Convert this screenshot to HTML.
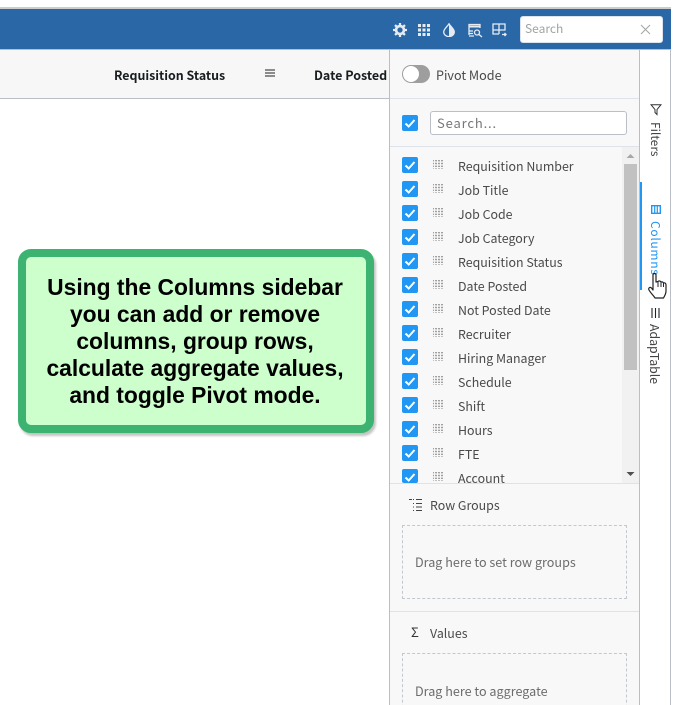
<!DOCTYPE html>
<html><head><meta charset="utf-8">
<style>
html,body{margin:0;padding:0;background:#fff;width:680px;height:705px;overflow:hidden}
body{position:relative;font-family:"Noto Sans CJK JP","Liberation Sans",sans-serif;color:#444}
.a{position:absolute;box-sizing:border-box}
.t{position:absolute;white-space:nowrap;font-size:12.4px;line-height:18px;color:#4a4a4a}
.cb{position:absolute;left:402px;width:16px;height:16px;background:#2196f3;border-radius:2px}
.cb svg{display:block}
.gr{position:absolute;left:433px;width:11px;height:10px}
.v{position:absolute;writing-mode:vertical-rl;white-space:nowrap;font-size:12px;line-height:16px}
</style></head><body>
<div class="a" style="left:0;top:7px;width:671px;height:2px;background:#ccc"></div>
<div class="a" style="left:0;top:9px;width:671px;height:40px;background:#2a67a7"></div>
<div class="a" style="left:0;top:49px;width:671px;height:1px;background:#babfc7"></div>

<div class="a" style="left:0;top:50px;width:389px;height:48px;background:#f7f7f7"></div>
<div class="a" style="left:0;top:98px;width:389px;height:1px;background:#babfc7"></div>
<div class="t" style="left:114px;top:66px;font-weight:700;font-size:12.4px;color:#181d1f">Requisition Status</div>
<svg class="a" style="left:265px;top:69px" width="10" height="9"><path d="M0 1H10M0 4H10M0 7H10" stroke="#222" stroke-width="1"/></svg>
<div class="t" style="left:314px;top:66px;font-weight:700;font-size:12.5px;color:#181d1f">Date Posted</div>

<!-- toolbar icons -->
<svg class="a" style="left:393px;top:23px" width="14" height="14" viewBox="0 0 16 16"><circle cx="8" cy="8" r="4.5" fill="none" stroke="#e6ebf2" stroke-width="3"/><path d="M8 0V16M0 8H16M2.300 2.300L13.700 13.700M13.700 2.300L2.300 13.700" stroke="#e6ebf2" stroke-width="2.600" stroke-dasharray="2.600 10.800 2.600 0"/></svg>
<svg class="a" style="left:418px;top:24px" width="12" height="12" fill="#e6ebf2"><rect x="0" y="0" width="3" height="3"/><rect x="4.500" y="0" width="3" height="3"/><rect x="9" y="0" width="3" height="3"/><rect x="0" y="4.500" width="3" height="3"/><rect x="4.500" y="4.500" width="3" height="3"/><rect x="9" y="4.500" width="3" height="3"/><rect x="0" y="9" width="3" height="3"/><rect x="4.500" y="9" width="3" height="3"/><rect x="9" y="9" width="3" height="3"/></svg>
<svg class="a" style="left:443px;top:23px" width="12" height="14" viewBox="0 0 12 14"><path d="M6 .8C4.500 3.500.7 6 .7 9a5.300 4.600 0 0 0 10.600 0C11.300 6 7.500 3.500 6 .8Z" fill="none" stroke="#e6ebf2" stroke-width="1.300"/><path d="M6 .8C7.500 3.500 11.300 6 11.300 9a5.300 4.600 0 0 1-5.300 4.600Z" fill="#e6ebf2"/></svg>
<svg class="a" style="left:468px;top:23px" width="15" height="15" viewBox="0 0 15 15" fill="none" stroke="#e6ebf2" stroke-width="1.300"><path d="M1 12V1.500H12V5"/><path d="M1 3.500H12" stroke-width="2"/><path d="M6 13H1M1 8H5M1 10.500H5"/><circle cx="9" cy="9.500" r="2.500"/><path d="M11 11.500L14 14"/></svg>
<svg class="a" style="left:492px;top:23px" width="15" height="14" viewBox="0 0 15 14" fill="none" stroke="#e6ebf2" stroke-width="1.300"><path d="M7 11H1V1H13V7H1M7 1V11"/><path d="M10 11.500H14M12.500 10L14 11.500L12.500 13"/></svg>

<div class="a" style="left:520px;top:16px;width:143px;height:27px;background:#fff;border-radius:3px;border:1px solid #dbe3ee"></div>
<div class="t" style="left:525px;top:20px;font-size:12px;color:#a3a3a3">Search</div>
<svg class="a" style="left:640px;top:24px" width="11" height="11"><path d="M1 1L10 10M10 1L1 10" stroke="#a8a8a8" stroke-width="1.100"/></svg>

<!-- panel -->
<div class="a" style="left:389px;top:50px;width:251px;height:655px;background:#f8f8f8;border-left:1px solid #babfc7;border-right:1px solid #babfc7"></div>
<div class="a" style="left:670px;top:50px;width:1px;height:655px;background:#babfc7"></div>
<div class="a" style="left:390px;top:98px;width:249px;height:1px;background:#dde2eb"></div>

<div class="a" style="left:402px;top:65px;width:28px;height:18px;background:#9e9e9e;border-radius:9px"></div>
<div class="a" style="left:403px;top:66px;width:16px;height:16px;background:#fff;border-radius:8px"></div>
<div class="t" style="left:436px;top:66px;font-size:12.600px">Pivot Mode</div>

<div class="cb" style="top:115px"><svg width="16" height="16"><path d="M3.500 8.500L6.700 11.500L12.500 5" fill="none" stroke="#fff" stroke-width="2"/></svg></div>
<div class="a" style="left:430px;top:111px;width:197px;height:24px;background:#fff;border:1px solid #babfc7;border-radius:3px"></div>
<div class="t" style="left:437px;top:114px;font-size:13px;letter-spacing:.85px;color:#777">Search...</div>
<div class="a" style="left:390px;top:146px;width:249px;height:1px;background:#dde2eb"></div>

<!-- list -->
<div class="a" style="left:622px;top:147px;width:17px;height:336px;background:#f1f1f1"></div>
<div class="a" style="left:624px;top:164px;width:13px;height:206px;background:#c1c1c1"></div>
<svg class="a" style="left:626px;top:153px" width="9" height="6"><path d="M0.500 5L4.500 1L8.500 5Z" fill="#a8a8a8"/></svg>
<svg class="a" style="left:626px;top:471px" width="9" height="6"><path d="M0.500 1L4.500 5L8.500 1Z" fill="#505050"/></svg>

<div class="cb" style="top:157px"><svg width="16" height="16"><path d="M3.500 8.500L6.700 11.500L12.500 5" fill="none" stroke="#fff" stroke-width="2"/></svg></div>
<svg class="gr" style="top:160px"><path d="M0 0V9M3 0V9M6 0V9M9 0V9" stroke="#666" stroke-width="1.200" stroke-dasharray="1.400 1.400"/></svg>
<div class="t" style="left:458px;top:157px">Requisition Number</div>
<div class="cb" style="top:181px"><svg width="16" height="16"><path d="M3.500 8.500L6.700 11.500L12.500 5" fill="none" stroke="#fff" stroke-width="2"/></svg></div>
<svg class="gr" style="top:184px"><path d="M0 0V9M3 0V9M6 0V9M9 0V9" stroke="#666" stroke-width="1.200" stroke-dasharray="1.400 1.400"/></svg>
<div class="t" style="left:458px;top:181px">Job Title</div>
<div class="cb" style="top:205px"><svg width="16" height="16"><path d="M3.500 8.500L6.700 11.500L12.500 5" fill="none" stroke="#fff" stroke-width="2"/></svg></div>
<svg class="gr" style="top:208px"><path d="M0 0V9M3 0V9M6 0V9M9 0V9" stroke="#666" stroke-width="1.200" stroke-dasharray="1.400 1.400"/></svg>
<div class="t" style="left:458px;top:205px">Job Code</div>
<div class="cb" style="top:229px"><svg width="16" height="16"><path d="M3.500 8.500L6.700 11.500L12.500 5" fill="none" stroke="#fff" stroke-width="2"/></svg></div>
<svg class="gr" style="top:232px"><path d="M0 0V9M3 0V9M6 0V9M9 0V9" stroke="#666" stroke-width="1.200" stroke-dasharray="1.400 1.400"/></svg>
<div class="t" style="left:458px;top:229px">Job Category</div>
<div class="cb" style="top:253px"><svg width="16" height="16"><path d="M3.500 8.500L6.700 11.500L12.500 5" fill="none" stroke="#fff" stroke-width="2"/></svg></div>
<svg class="gr" style="top:256px"><path d="M0 0V9M3 0V9M6 0V9M9 0V9" stroke="#666" stroke-width="1.200" stroke-dasharray="1.400 1.400"/></svg>
<div class="t" style="left:458px;top:253px">Requisition Status</div>
<div class="cb" style="top:277px"><svg width="16" height="16"><path d="M3.500 8.500L6.700 11.500L12.500 5" fill="none" stroke="#fff" stroke-width="2"/></svg></div>
<svg class="gr" style="top:280px"><path d="M0 0V9M3 0V9M6 0V9M9 0V9" stroke="#666" stroke-width="1.200" stroke-dasharray="1.400 1.400"/></svg>
<div class="t" style="left:458px;top:277px">Date Posted</div>
<div class="cb" style="top:301px"><svg width="16" height="16"><path d="M3.500 8.500L6.700 11.500L12.500 5" fill="none" stroke="#fff" stroke-width="2"/></svg></div>
<svg class="gr" style="top:304px"><path d="M0 0V9M3 0V9M6 0V9M9 0V9" stroke="#666" stroke-width="1.200" stroke-dasharray="1.400 1.400"/></svg>
<div class="t" style="left:458px;top:301px">Not Posted Date</div>
<div class="cb" style="top:325px"><svg width="16" height="16"><path d="M3.500 8.500L6.700 11.500L12.500 5" fill="none" stroke="#fff" stroke-width="2"/></svg></div>
<svg class="gr" style="top:328px"><path d="M0 0V9M3 0V9M6 0V9M9 0V9" stroke="#666" stroke-width="1.200" stroke-dasharray="1.400 1.400"/></svg>
<div class="t" style="left:458px;top:325px">Recruiter</div>
<div class="cb" style="top:349px"><svg width="16" height="16"><path d="M3.500 8.500L6.700 11.500L12.500 5" fill="none" stroke="#fff" stroke-width="2"/></svg></div>
<svg class="gr" style="top:352px"><path d="M0 0V9M3 0V9M6 0V9M9 0V9" stroke="#666" stroke-width="1.200" stroke-dasharray="1.400 1.400"/></svg>
<div class="t" style="left:458px;top:349px">Hiring Manager</div>
<div class="cb" style="top:373px"><svg width="16" height="16"><path d="M3.500 8.500L6.700 11.500L12.500 5" fill="none" stroke="#fff" stroke-width="2"/></svg></div>
<svg class="gr" style="top:376px"><path d="M0 0V9M3 0V9M6 0V9M9 0V9" stroke="#666" stroke-width="1.200" stroke-dasharray="1.400 1.400"/></svg>
<div class="t" style="left:458px;top:373px">Schedule</div>
<div class="cb" style="top:397px"><svg width="16" height="16"><path d="M3.500 8.500L6.700 11.500L12.500 5" fill="none" stroke="#fff" stroke-width="2"/></svg></div>
<svg class="gr" style="top:400px"><path d="M0 0V9M3 0V9M6 0V9M9 0V9" stroke="#666" stroke-width="1.200" stroke-dasharray="1.400 1.400"/></svg>
<div class="t" style="left:458px;top:397px">Shift</div>
<div class="cb" style="top:421px"><svg width="16" height="16"><path d="M3.500 8.500L6.700 11.500L12.500 5" fill="none" stroke="#fff" stroke-width="2"/></svg></div>
<svg class="gr" style="top:424px"><path d="M0 0V9M3 0V9M6 0V9M9 0V9" stroke="#666" stroke-width="1.200" stroke-dasharray="1.400 1.400"/></svg>
<div class="t" style="left:458px;top:421px">Hours</div>
<div class="cb" style="top:445px"><svg width="16" height="16"><path d="M3.500 8.500L6.700 11.500L12.500 5" fill="none" stroke="#fff" stroke-width="2"/></svg></div>
<svg class="gr" style="top:448px"><path d="M0 0V9M3 0V9M6 0V9M9 0V9" stroke="#666" stroke-width="1.200" stroke-dasharray="1.400 1.400"/></svg>
<div class="t" style="left:458px;top:445px">FTE</div>
<div class="cb" style="top:469px;height:14px;overflow:hidden"><svg width="16" height="16"><path d="M3.500 8.500L6.700 11.500L12.500 5" fill="none" stroke="#fff" stroke-width="2"/></svg></div>
<svg class="gr" style="top:472px"><path d="M0 0V9M3 0V9M6 0V9M9 0V9" stroke="#666" stroke-width="1.200" stroke-dasharray="1.400 1.400"/></svg>
<div class="t" style="left:458px;top:469px">Account</div>

<div class="a" style="left:390px;top:483px;width:249px;height:1px;background:#dde2eb"></div>

<!-- row groups -->
<svg class="a" style="left:409px;top:499px" width="14" height="12"><path d="M0 .5H3M4 .5H5M7 .5H13M4 4.500H5M7 4.500H13M4 8H5M7 8H13M4 11.500H5M7 11.500H13" stroke="#444" stroke-width="1"/></svg>
<div class="t" style="left:430px;top:496px;font-size:12.400px">Row Groups</div>
<div class="a" style="left:402px;top:525px;width:225px;height:74px;border:1px dashed #c3c7cf"></div>
<div class="t" style="left:415px;top:553px;font-size:12.600px;color:#6c6c6c">Drag here to set row groups</div>
<div class="a" style="left:390px;top:611px;width:249px;height:1px;background:#dde2eb"></div>

<!-- values -->
<div class="t" style="left:411px;top:623px;font-size:13px;color:#333">Σ</div>
<div class="t" style="left:430px;top:624px;font-size:12.400px">Values</div>
<div class="a" style="left:402px;top:653px;width:225px;height:60px;border:1px dashed #c3c7cf"></div>
<div class="t" style="left:415px;top:682px;font-size:12.600px;color:#6c6c6c">Drag here to aggregate</div>

<!-- side tabs -->
<svg class="a" style="left:650px;top:104px" width="12" height="12"><path d="M1 .7H11L7 5.500V10.500L5 8.500V5.500Z" fill="none" stroke="#333" stroke-width="1"/></svg>
<div class="v" style="left:647px;top:122px;color:#444">Filters</div>
<div class="a" style="left:640px;top:182px;width:2px;height:108px;background:#2196f3"></div>
<svg class="a" style="left:651px;top:205px" width="10" height="9"><path d="M.7.700H9.300V8.300H.7Z" fill="none" stroke="#2196f3" stroke-width="1.400"/><path d="M3.700 1V8M6.300 1V8" stroke="#2196f3" stroke-width="1.200"/></svg>
<div class="v" style="left:647px;top:221px;color:#2196f3;letter-spacing:.7px">Columns</div>
<svg class="a" style="left:651px;top:308px" width="10" height="10"><path d="M1 0V10M4.500 0V10M8 0V10" stroke="#222" stroke-width="1.100"/></svg>
<div class="v" style="left:647px;top:324px;color:#444;font-size:12.300px">AdapTable</div>

<!-- hand cursor -->
<svg class="a" style="left:648px;top:272px" width="19" height="27" viewBox="0 0 19 27"><path d="M5 3C5 1 8 1 8 3V10L10 9.500C11 8.500 12.500 9 13 10C14 9.500 15 10 15.500 11C16.500 10.500 18 11 18 13V19C18 22 16.500 24 15.500 26H7C6 24 3 21.500 1 18C0 16 2 14.500 3.500 16L5 18Z" fill="#fff" stroke="#222" stroke-width="1.200" stroke-linejoin="round"/><path d="M10 10V15M13 10V15M15.500 11V15" stroke="#222" stroke-width="1"/></svg>

<!-- callout -->
<div class="a" style="left:18px;top:249px;width:356px;height:184px;background:#ccffcc;border:8px solid #3cb371;border-radius:13px;box-shadow:2px 3px 2px #c4c4c4"></div>
<div class="a" style="left:18px;top:274px;width:354px;text-align:center;font-family:'Liberation Sans',Arial,sans-serif;font-weight:700;font-size:22.850px;line-height:27px;color:#000">Using the Columns sidebar<br>you can add or remove<br>columns, group rows,<br>calculate aggregate values,<br>and toggle Pivot mode.</div>
</body></html>
